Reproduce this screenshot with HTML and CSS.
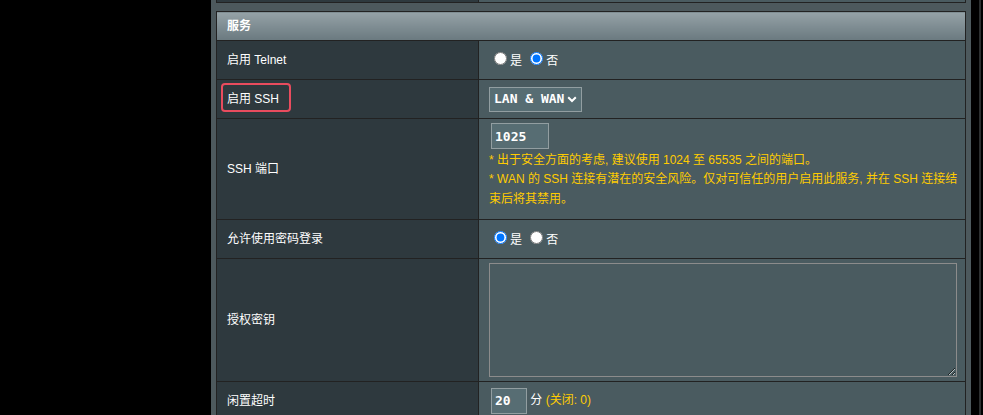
FILE: index.html
```html
<!DOCTYPE html>
<html lang="zh-CN">
<head>
<meta charset="utf-8">
<title>服务</title>
<link rel="stylesheet" href="styles.css">
</head>
<body>
<div class="page">
  <div class="side-left"></div>
  <main class="panel">
    <div class="prev-table">
      <div class="prev-th"></div>
      <div class="prev-td"></div>
    </div>
    <table class="form-table">
      <thead>
        <tr><td colspan="2">服务</td></tr>
      </thead>
      <tbody>
        <tr>
          <th>启用 Telnet</th>
          <td>
            <label class="radio"><input type="radio" name="telnet">是</label>
            <label class="radio"><input type="radio" name="telnet" checked>否</label>
          </td>
        </tr>
        <tr>
          <th class="marked">启用 SSH<span class="highlight"></span></th>
          <td>
            <div class="select">
              <span>LAN &amp; WAN</span>
              <svg class="chevron" width="10" height="7" viewBox="0 0 10 7"><polyline points="1.2,1.2 5,5 8.8,1.2" fill="none" stroke="#fff" stroke-width="2"/></svg>
            </div>
          </td>
        </tr>
        <tr>
          <th>SSH 端口</th>
          <td>
            <input class="text-input port" type="text" value="1025">
            <div class="hint">* 出于安全方面的考虑, 建议使用 1024 至 65535 之间的端口。</div>
            <div class="hint last">* WAN 的 SSH 连接有潜在的安全风险。仅对可信任的用户启用此服务, 并在 SSH 连接结束后将其禁用。</div>
          </td>
        </tr>
        <tr>
          <th>允许使用密码登录</th>
          <td>
            <label class="radio"><input type="radio" name="pwd" checked>是</label>
            <label class="radio"><input type="radio" name="pwd">否</label>
          </td>
        </tr>
        <tr>
          <th>授权密钥</th>
          <td class="key-cell"><textarea class="keys"></textarea></td>
        </tr>
        <tr>
          <th>闲置超时</th>
          <td>
            <input class="text-input timeout" type="text" value="20"> 分 <span class="note">(关闭: 0)</span>
          </td>
        </tr>
      </tbody>
    </table>
  </main>
  <div class="side-right"><div class="scroll-line"></div></div>
</div>
</body>
</html>
```

FILE: styles.css
```css
html, body {
  margin: 0;
  padding: 0;
  background: #000;
  height: 100%;
  overflow: hidden;
}

body {
  font-family: "Liberation Sans", Arial, "Noto Sans CJK SC", sans-serif;
  font-size: 12px;
  color: #fff;
}

.page {
  display: flex;
  height: 415px;
}

.side-left {
  flex: 0 0 211px;
}

.panel {
  flex: 0 0 760px;
  box-sizing: border-box;
  padding: 0 5px;
  background: #4d595d;
}

.side-right {
  flex: 1;
  display: flex;
  padding-left: 8px;
}

.scroll-line {
  width: 2px;
  background: #2c2f30;
}

.prev-table {
  display: flex;
  height: 2px;
  border: 1px solid #222;
  border-top: none;
  margin-bottom: 8px;
}

.prev-th {
  flex: 0 0 261px;
  background: #2e393e;
  border-right: 1px solid #222;
}

.prev-td {
  flex: 1;
  background: #4a5b60;
}

.form-table {
  width: 750px;
  border-collapse: collapse;
  border: 1px solid #222;
}

.form-table thead td {
  height: 28px;
  padding: 0 10px;
  line-height: 14px;
  font-weight: bold;
  color: #fff;
  background: linear-gradient(to bottom, #95a2a7 0%, #6a797f 100%);
  border: 1px solid #222;
}

.form-table th,
.form-table td {
  border: 1px solid #222;
  vertical-align: middle;
  line-height: 14px;
}

.form-table th {
  width: 241px;
  height: 30px;
  padding: 4px 10px;
  text-align: left;
  font-weight: normal;
  background: #2e393e;
  color: #fff;
}

.form-table tbody td {
  height: 30px;
  padding: 4px 8px 4px 10px;
  background: #4a5b60;
  color: #fff;
}

.marked {
  position: relative;
}

.highlight {
  position: absolute;
  left: 4px;
  top: 3px;
  width: 70px;
  height: 29px;
  box-sizing: border-box;
  border: 2px solid #e94c5e;
  border-radius: 4px;
}

.radio input {
  margin: 0 3px 0 5px;
}

.select {
  display: inline-flex;
  align-items: center;
  gap: 3px;
  box-sizing: border-box;
  height: 25px;
  padding: 0 4px 0 4px;
  border: 1px solid #929ea1;
  background: #576d73;
  font-family: "DejaVu Sans Mono", monospace;
  font-size: 13px;
  font-weight: bold;
  color: #fff;
  vertical-align: middle;
}

.chevron {
  display: block;
}

.text-input {
  box-sizing: border-box;
  height: 26px;
  margin: 0 0 0 2px;
  padding: 0 3px;
  border: 1px solid #929ea1;
  background: #576d73;
  color: #fff;
  font-family: "DejaVu Sans Mono", monospace;
  font-size: 13px;
  font-weight: bold;
  outline: none;
  vertical-align: middle;
}

.port {
  display: block;
  width: 58px;
  margin-bottom: 2px;
}

.timeout {
  width: 36px;
}

.hint {
  color: #ffcc00;
  line-height: 19.33px;
  margin-right: -6px;
}

.hint.last {
  margin-bottom: 6px;
}

.note {
  color: #ffcc00;
}

.key-cell {
  padding-top: 4px;
  padding-bottom: 4px;
}

.keys {
  display: block;
  box-sizing: border-box;
  width: 468px;
  height: 114px;
  margin: 0;
  border: 1px solid #8c8c8c;
  background: #4a5b60;
  color: #fff;
  outline: none;
}
```
